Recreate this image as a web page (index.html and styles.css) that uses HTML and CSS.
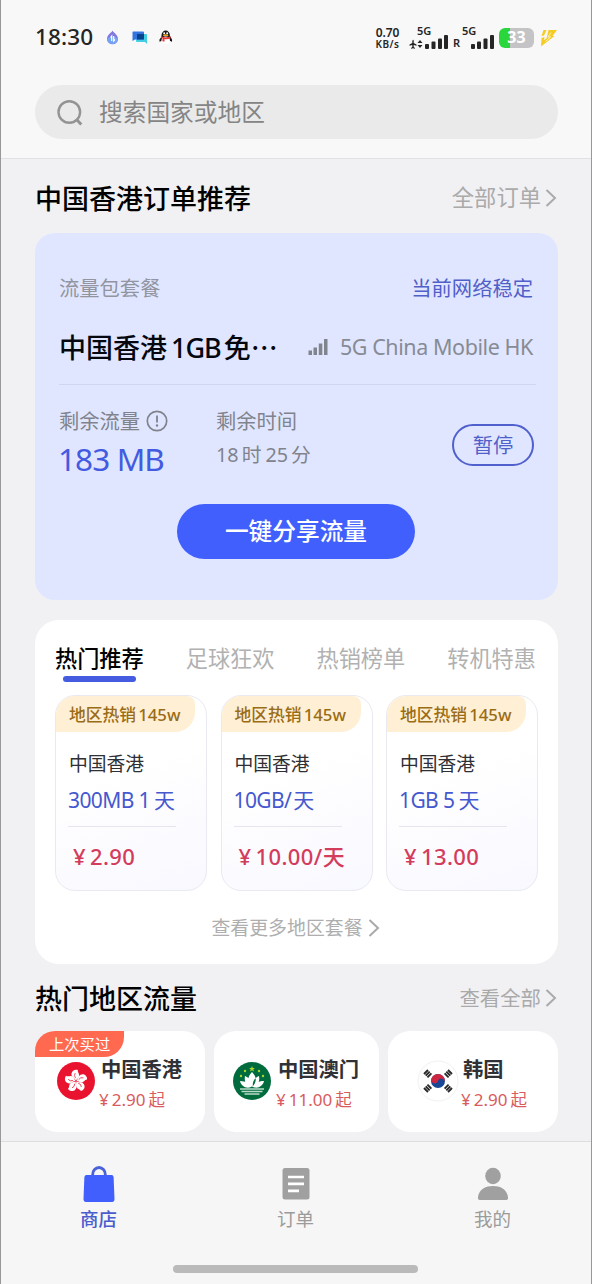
FILE: index.html
```html
<!DOCTYPE html>
<html lang="zh-CN">
<head>
<meta charset="utf-8">
<title>商店</title>
<link rel="stylesheet" href="styles.css">
</head>
<body>
<div class="screen">
  <header class="top">
    <div class="status">
      <span class="clock">18:30</span>
      <svg class="app-icons" width="70" height="18" viewBox="0 0 70 18">
        <path d="M7.500 1.500C8.500 4 13 5.500 13 10A5.500 5.300 0 0 1 2 10C2 5.500 6.500 4 7.500 1.500Z" fill="#7f78e0"/>
        <path d="M2 9.500A5.500 5.500 0 0 0 13 9.500Q7.500 6 2 9.500Z" fill="#74a4f5"/>
        <path d="M6.700 12V7L5.500 8.500M8.700 7V12L10 10.500" fill="none" stroke="#fff" stroke-width="1.200"/>
        <rect x="31" y="5" width="11" height="8" rx="1" fill="#42cfe2"/>
        <path d="M39 12H42V15Z" fill="#42cfe2"/>
        <path d="M28 2.500H38Q39 2.500 39 3.500V9.500Q39 10.500 38 10.500H30L27.500 12V3.500Q27.500 2.500 28 2.500Z" fill="#3475e0"/>
        <rect x="32" y="5" width="7" height="5.500" fill="#07448d"/>
        <path d="M56 12Q54 14 54.500 10.500L57 7H65L67 10.500Q67.500 14 65.500 12Z" fill="#171717"/>
        <ellipse cx="60.700" cy="6.500" rx="4.200" ry="5" fill="#171717"/>
        <ellipse cx="60.700" cy="11.300" rx="4.200" ry="3.900" fill="#fff"/>
        <circle cx="59.200" cy="4.200" r="1" fill="#fff"/><circle cx="62.200" cy="4.200" r="1" fill="#fff"/>
        <ellipse cx="60.700" cy="6.200" rx="2.800" ry=".9" fill="#efa726"/>
        <path d="M56 7.300Q60.700 9.500 65.500 7.300V9.300Q62 10.600 59.500 9.900V12.500H57.500V9.300L56 8.900Z" fill="#e93535"/>
      </svg>
      <span class="grow"></span>
      <div class="speed"><b>0.70</b><span>KB/s</span></div>
      <div class="sim sim-a">
        <b>5G</b>
        <svg width="40" height="16" viewBox="0 0 40 16" fill="#252525">
          <path d="M3.800 6Q4.700 5.200 4.700 7V9L7.500 10.500V11.700L4.700 11V13L6 14V14.800L4 14.300L2 14.800V14L3.300 13V11L.5 11.700V10.500L3.300 9V7Z"/>
          <path d="M11 6L13.500 9H8.500ZM11 14L8.500 11H13.500Z"/>
          <rect x="16" y="10" width="4" height="5" rx="1"/><rect x="22.500" y="7.500" width="4" height="7.500" rx="1"/><rect x="29" y="4.500" width="4" height="10.500" rx="1"/><rect x="35" y="1" width="4" height="14" rx="1"/>
        </svg>
      </div>
      <div class="sim sim-b">
        <b>5G</b>
        <div class="roam"><i>R</i>
        <svg width="25" height="16" viewBox="0 0 25 16" fill="#252525">
          <rect x="1" y="10" width="4" height="5" rx="1"/><rect x="7" y="7.500" width="4" height="7.500" rx="1"/><rect x="13.500" y="4.500" width="4" height="10.500" rx="1"/><rect x="20" y="1" width="4" height="14" rx="1"/>
        </svg></div>
      </div>
      <div class="battery"><span>33</span></div>
      <svg class="bolt" width="18" height="18" viewBox="0 0 18 18"><path d="M3.500 1H6.500L4 6.500L1.500 7ZM8.500 1H17L12.500 7H14.500L1 17.500L1.500 9L4.500 8L4 11L6.500 9.500Z" fill="#f5cc24"/><path d="M11 3.500L8 8H10.500L5.500 12.500" fill="none" stroke="#fff5cf" stroke-width=".9"/></svg>
    </div>
    <div class="search">
      <svg width="28" height="28" viewBox="0 0 28 28" fill="none" stroke="#939393" stroke-width="2.400"><circle cx="13.300" cy="13" r="10.800"/><path d="M20.500 20.500L25.300 25.500" stroke-width="3"/></svg>
      <span>搜索国家或地区</span>
    </div>
  </header>

  <main>
    <div class="head head-orders">
      <h2>中国香港订单推荐</h2>
      <a class="all-orders">全部订单<svg width="12" height="20" viewBox="0 0 12 20"><path d="M1.500 2L10 10L1.500 18"/></svg></a>
    </div>

    <section class="plan">
      <div class="plan-top"><span>流量包套餐</span><span class="stable">当前网络稳定</span></div>
      <div class="plan-name">
        <h3>中国香港<span class="lat">1GB</span>免<span class="cjk">…</span></h3>
        <div class="carrier">
          <svg width="20" height="18" viewBox="0 0 20 18" fill="#80848c"><rect x=".5" y="12.500" width="3.500" height="4.500"/><rect x="5.500" y="9.500" width="3.500" height="7.500"/><rect x="10.800" y="5.500" width="3.500" height="11.500"/><rect x="16" y="1" width="3.500" height="16"/></svg>
          <span>5G China Mobile HK</span>
        </div>
      </div>
      <div class="usage">
        <div class="left-data">
          <div class="label">剩余流量<svg width="22" height="22" viewBox="0 0 22 22"><circle cx="11" cy="11" r="9.700" fill="none" stroke="#80838c" stroke-width="1.700"/><path d="M11 5.500V12.500" stroke="#80838c" stroke-width="1.800"/><circle cx="11" cy="15.500" r="1.200" fill="#80838c"/></svg></div>
          <div class="amount">183 MB</div>
        </div>
        <div class="left-time">
          <div class="label">剩余时间</div>
          <div class="time"><span>18</span>时<span class="lat">25</span>分</div>
        </div>
        <button class="pause">暂停</button>
      </div>
      <button class="share">一键分享流量</button>
    </section>

    <section class="hot">
      <nav class="tabs"><span class="tab on">热门推荐</span><span class="tab">足球狂欢</span><span class="tab">热销榜单</span><span class="tab">转机特惠</span></nav>
      <div class="deals">
        <article class="deal"><div class="tag">地区热销<span>145w</span></div><p class="place">中国香港</p><p class="size">300MB 1<span class="day">天</span></p><p class="price"><span class="yen">¥</span>2.90</p></article>
        <article class="deal"><div class="tag">地区热销<span>145w</span></div><p class="place">中国香港</p><p class="size">10GB/<span class="per">天</span></p><p class="price"><span class="yen">¥</span>10.00/天</p></article>
        <article class="deal"><div class="tag">地区热销<span>145w</span></div><p class="place">中国香港</p><p class="size">1GB 5<span class="day">天</span></p><p class="price"><span class="yen">¥</span>13.00</p></article>
      </div>
      <a class="more">查看更多地区套餐<svg width="12" height="20" viewBox="0 0 12 20"><path d="M1.500 2L10 10L1.500 18"/></svg></a>
    </section>

    <div class="head head-regions">
      <h2>热门地区流量</h2>
      <a>查看全部<svg width="12" height="20" viewBox="0 0 12 20"><path d="M1.500 2L10 10L1.500 18"/></svg></a>
    </div>

    <section class="regions">
      <article class="region">
        <span class="badge">上次买过</span>
        <svg class="flag" width="42" height="42" viewBox="-21 -21 42 42">
          <defs><g id="petal"><path d="M0-.5C-1.500-3-5-4-4.500-7.500C-4-11-.5-12 2-11C.8-9 4.500-7 2.800-4C2-2.500 1-2 0-.5Z" fill="#fff"/><path d="M-.5-3Q-2.500-5.500-.8-8" fill="none" stroke="#e8112d" stroke-width=".7"/></g></defs>
          <circle r="19" fill="#e9132f"/>
          <use href="#petal"/><use href="#petal" transform="rotate(72)"/><use href="#petal" transform="rotate(144)"/><use href="#petal" transform="rotate(216)"/><use href="#petal" transform="rotate(288)"/>
        </svg>
        <div class="info"><h4>中国香港</h4><p><span class="yen">¥</span>2.90<span class="from">起</span></p></div>
      </article>
      <article class="region region-mo">
        <svg class="flag" width="42" height="42" viewBox="-21 -21 42 42">
          <circle r="19" fill="#006b3c"/>
          <g fill="#fff"><path d="M0-9C5-4 5 1 0 6C-5 1-5-4 0-9ZM-7-5C-2-3 0 2-1 6C-6 5-8 0-7-5ZM7-5C2-3 0 2 1 6C6 5 8 0 7-5ZM-12 0C-6 0-3 3-1 6C-6 8-11 5-12 0ZM12 0C6 0 3 3 1 6C6 8 11 5 12 0Z"/></g>
          <path d="M-12 8H12M-10.500 10.500H10.500M-7.500 13H7.500" stroke="#b8dac9" stroke-width="1.300"/>
          <path d="M0-15L.8-13H3L1.300-11.700L2-9.500L0-10.800L-2-9.500L-1.300-11.700L-3-13H-.8Z" fill="#a9d52c"/>
          <g fill="#a9d52c"><circle cx="-7" cy="-10" r="1.200"/><circle cx="7" cy="-10" r="1.200"/><circle cx="-11" cy="-5" r="1.200"/><circle cx="11" cy="-5" r="1.200"/></g>
        </svg>
        <div class="info"><h4>中国澳门</h4><p><span class="yen">¥</span>11.00<span class="from">起</span></p></div>
      </article>
      <article class="region region-kr">
        <svg class="flag" width="42" height="42" viewBox="-21 -21 42 42">
          <circle r="20" fill="#fff" stroke="#f1f1f1"/>
          <circle r="7" fill="#174795"/>
          <path transform="rotate(20)" d="M-7 0A7 7 0 0 1 7 0A3.500 3.500 0 0 0 0 0A3.500 3.500 0 0 1-7 0Z" fill="#cf263f"/>
          <path d="M-14-7L-10-11M-12.300-5.300L-8.300-9.300M-10.600-3.600L-6.600-7.600M14-7L10-11M12.300-5.300L8.300-9.300M10.600-3.600L6.600-7.600M-14 7L-10 11M-12.300 5.300L-8.300 9.300M-10.600 3.600L-6.600 7.600M14 7L10 11M12.300 5.300L8.300 9.300M10.600 3.600L6.600 7.600" stroke="#292929" stroke-width="1.900"/>
        </svg>
        <div class="info"><h4>韩国</h4><p><span class="yen">¥</span>2.90<span class="from">起</span></p></div>
      </article>
    </section>
  </main>

  <footer class="bottom">
    <nav>
      <a class="on"><svg width="40" height="42" viewBox="0 0 40 42"><path d="M13.700 16V14.500A6.300 7 0 0 1 26.300 14.500V16" fill="none" stroke="#4b61d8" stroke-width="2.800"/><path d="M7.500 15H32.500Q34.500 15 34.600 17L35.500 39Q35.500 42 33 42H7Q4.500 42 4.500 39L5.400 17Q5.500 15 7.500 15Z" fill="#405ffc"/></svg>商店</a>
      <a><svg width="40" height="42" viewBox="0 0 40 42"><rect x="6.500" y="8" width="27" height="31.500" rx="2.500" fill="#a0a0a0"/><path d="M12 17H28M12 23.800H28M12 30.800H23" stroke="#fff" stroke-width="2.700"/></svg>订单</a>
      <a><svg width="40" height="42" viewBox="0 0 40 42" fill="#a0a0a0"><ellipse cx="20" cy="16" rx="7.800" ry="8.200"/><path d="M5 37C6 29 13 26 20 26S34 29 35 37Q35.500 40 33 40H7Q4.500 40 5 37Z"/></svg>我的</a>
    </nav>
    <div class="home-bar"></div>
  </footer>
</div>
</body>
</html>
```

FILE: styles.css
```css
* { box-sizing: border-box; }
body, h2, h3, h4, p { margin: 0; font-weight: 400; }
svg { display: block; flex: none; }
body {
  font-family: "Noto Sans", "Noto Sans CJK SC", sans-serif;
  line-height: 1;
  white-space: nowrap;
}
button { font-family: inherit; line-height: 1; padding: 0; }
.cjk { font-family: "Noto Sans CJK SC", sans-serif; }
.screen {
  width: 592px;
  height: 1284px;
  display: flex;
  flex-direction: column;
  overflow: hidden;
  background: #f1f1f4;
  border-left: 1px solid #98989a;
  border-right: 1px solid #98989a;
}

.top { height: 159px; flex: none; background: #f8f8f9; border-bottom: 1px solid #e1e1e4; }
.status { height: 85px; padding: 10px 33px 20px 34px; display: flex; align-items: center; color: #252525; }
.clock { font-size: 22.500px; font-weight: 500; width: 70px; letter-spacing: .1px; }
.grow { flex: 1; }
.speed { width: 27px; margin-right: 8px; display: flex; flex-direction: column; align-items: center; font-weight: 600; }
.speed b { font-size: 12px; font-weight: 600; line-height: 12px; letter-spacing: -.1px; }
.speed span { font-size: 10px; line-height: 10px; letter-spacing: .5px; }
.sim { display: flex; flex-direction: column; height: 24px; }
.sim b { font-size: 11px; font-weight: 600; line-height: 10px; height: 8px; }
.sim-a { width: 40px; margin-right: 4px; }
.sim-a b { padding-left: 8px; }
.sim-b { width: 42px; margin-right: 4px; }
.sim-b b { padding-left: 9px; }
.roam { display: flex; align-items: flex-end; justify-content: space-between; }
.roam i { font-style: normal; font-size: 11px; font-weight: 600; line-height: 14px; }
.battery {
  width: 35px; height: 20px; border-radius: 6px; margin-right: 6px;
  background: linear-gradient(90deg, #29d63c 11px, #c4c4c6 11px);
  color: #fff; font-size: 16px; font-weight: 700; text-align: center; line-height: 19px;
}
.search {
  width: 523px; height: 54px; margin-left: 34px; padding: 2px 0 0 21px; border-radius: 27px;
  background: #eaeaeb; display: flex; align-items: center; gap: 15px; font-size: 23.700px; color: #858585;
}

main { flex: none; height: 982px; padding: 0 34px; }
.head { display: flex; align-items: center; justify-content: space-between; color: #000; }
.head h2 { font-size: 27px; font-weight: 500; }
.head a { display: flex; align-items: center; gap: 4px; color: #aaa; font-size: 20.400px; }
.head .all-orders { font-size: 22.300px; padding-top: 1px; }
.head a path, .more path { fill: none; stroke: #aaa; stroke-width: 2; }
.head-orders { height: 74px; padding-top: 4px; }
.head-regions { height: 67px; padding-top: 1px; }

.plan { height: 367px; border-radius: 20px; background: #e0e6ff; padding: 42px 22px 0 24px; margin-right: -1px; }
.plan-top { display: flex; justify-content: space-between; height: 26px; align-items: center; font-size: 20.300px; color: #92959f; padding-right: 3px; }
.plan-top .stable { color: #505fc9; }
.plan-name { display: flex; justify-content: space-between; align-items: center; height: 84px; padding: 9px 3px 0 0; border-bottom: 1px solid #cfd6f0; }
.plan-name h3 { font-size: 27px; font-weight: 500; color: #05070f; }
.plan-name .lat { margin: 0 3px 0 4px; letter-spacing: -1px; }
.carrier { display: flex; align-items: center; gap: 12px; color: #878b94; font-size: 21.500px; letter-spacing: -.42px; }
.usage { display: flex; height: 119px; padding: 24px 2px 0 0; color: #80838c; }
.left-data { width: 157px; }
.label { display: flex; align-items: center; gap: 7px; height: 24px; font-size: 20.300px; }
.label svg { margin-left: -1px; }
.amount { margin-left: -1px; font-size: 31.500px; letter-spacing: -.9px; color: #435be0; line-height: 51px; }
.time { font-size: 19.800px; line-height: 44px; }
.time .lat { margin-left: 4px; }
.time span { margin-right: 3px; }
.pause { width: 82px; height: 42px; margin: 15px 0 0 auto; border: 2px solid #5060cc; border-radius: 21px; background: none; font-size: 20.300px; color: #505fc9; }
.share { display: block; width: 238px; height: 55px; margin-left: 118px; border: 0; border-radius: 28px; background: #405ffd; color: #fff; font-size: 23.700px; font-weight: 500; }

.hot { height: 344px; margin: 20px -1px 0 0; border-radius: 24px; background: #fff; padding: 24px 20px 0; }
.tabs { display: flex; justify-content: space-between; height: 51px; font-size: 22.200px; color: #b1b1b1; padding-right: 2px; }
.tab { line-height: 29px; }
.tab.on { color: #000; font-weight: 500; }
.tab.on::after { content: ""; display: block; width: 73px; height: 6px; margin: 3px auto 0; border-radius: 3px; background: #455be0; }
.deals { display: grid; grid-template-columns: repeat(3, 152px); gap: 13.500px; }
.deal { height: 196px; border: 1px solid #e9e9f2; border-radius: 20px; overflow: hidden; background: linear-gradient(160deg, #fff 40%, #f8f8ff); }
.tag { width: 140px; height: 36px; margin-left: -1px; padding-left: 14px; border-radius: 0 8px 20px 0; background: #fff0d5; color: #9a6c16; font-size: 16.800px; font-weight: 500; line-height: 37px; }
.tag span { margin-left: 2px; }
.place { margin: 19px 0 0 13px; height: 26px; line-height: 26px; font-size: 18.800px; color: #2f3035; }
.size { margin: 10px 30px 0 12px; height: 40px; line-height: 27px; font-size: 21px; letter-spacing: -.6px; color: #4558cf; border-bottom: 1px solid #e5e6ef; }
.day { margin-left: 4px; }
.per { margin-left: 2px; }
.price { margin: 15px 0 0 17px; line-height: 28px; font-size: 22px; color: #d43c5c; font-weight: 500; letter-spacing: .4px; }
.yen { margin-right: 4px; }
.more { display: flex; justify-content: center; align-items: center; gap: 5px; margin: 27px 2px 0 0; font-size: 18.900px; color: #aeaeae; }

.regions { display: grid; grid-template-columns: 170px 165px 170px; gap: 9px; }
.region { position: relative; display: flex; height: 101px; padding: 29px 0 0 20px; border-radius: 22px; background: #fff; }
.region-mo { padding-left: 17px; }
.region-kr { padding-left: 29px; }
.badge { position: absolute; left: 0; top: 0; width: 89px; height: 26px; padding-left: 14px; border-radius: 20px 0 20px 0; background: #ff6950; color: #fff; font-size: 15.300px; line-height: 26px; }
.info { margin: -4px 0 0 2px; }
.region-mo .info { margin-left: 3px; }
.info h4 { padding-left: 2px; font-size: 20.300px; font-weight: 700; line-height: 27px; color: #303136; }
.info p { margin-top: 3px; font-size: 17px; line-height: 27px; color: #d85b5d; }
.info .yen { margin-right: 3px; }
.info .from { margin-left: 3px; font-size: 16.500px; }

.bottom { height: 143px; flex: none; border-top: 1px solid #dedede; background: #f6f6f6; }
.bottom nav { display: grid; grid-template-columns: repeat(3, 197px); height: 123px; margin-left: -1px; padding-top: 18px; }
.bottom a { display: flex; flex-direction: column; align-items: center; gap: 8px; font-size: 18.500px; color: #9b9b9b; }
.bottom a.on { color: #4b5dcd; font-weight: 500; }
.home-bar { width: 245px; height: 8px; margin: 0 auto 0 172px; border-radius: 4px; background: #bababa; }
```
